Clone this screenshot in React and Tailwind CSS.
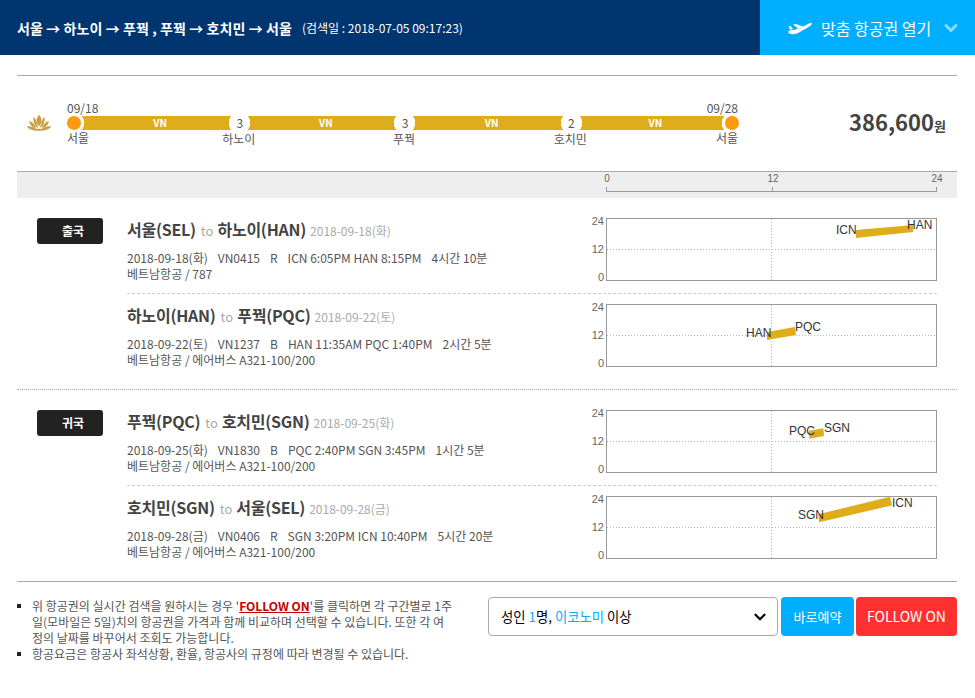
import { ChevronDown } from "lucide-react"

const FONT = "font-['Noto_Sans_CJK_KR','Noto_Sans',sans-serif]"

const TRIPS = [
  {
    label: "출국",
    legs: [
      {
        from: "서울(SEL)",
        to: "하노이(HAN)",
        date: "2018-09-18(화)",
        detail: ["2018-09-18(화)", "VN0415", "R", "ICN 6:05PM HAN 8:15PM", "4시간 10분"],
        carrier: "베트남항공 / 787",
        bar: "276,12 333,7 333,14 276,20",
        labels: [
          { text: "ICN", x: 256, y: 16 },
          { text: "HAN", x: 327, y: 11 },
        ],
      },
      {
        from: "하노이(HAN)",
        to: "푸꿕(PQC)",
        date: "2018-09-22(토)",
        detail: ["2018-09-22(토)", "VN1237", "B", "HAN 11:35AM PQC 1:40PM", "2시간 5분"],
        carrier: "베트남항공 / 에어버스 A321-100/200",
        bar: "187,28 215,23 216,31 187,36",
        labels: [
          { text: "HAN", x: 166, y: 33 },
          { text: "PQC", x: 215, y: 27 },
        ],
      },
    ],
  },
  {
    label: "귀국",
    legs: [
      {
        from: "푸꿕(PQC)",
        to: "호치민(SGN)",
        date: "2018-09-25(화)",
        detail: ["2018-09-25(화)", "VN1830", "B", "PQC 2:40PM SGN 3:45PM", "1시간 5분"],
        carrier: "베트남항공 / 에어버스 A321-100/200",
        bar: "229,20.7 243.3,18.3 244,26 229.3,28.7",
        labels: [
          { text: "PQC", x: 209, y: 25 },
          { text: "SGN", x: 244, y: 22 },
        ],
      },
      {
        from: "호치민(SGN)",
        to: "서울(SEL)",
        date: "2018-09-28(금)",
        detail: ["2018-09-28(금)", "VN0406", "R", "SGN 3:20PM ICN 10:40PM", "5시간 20분"],
        carrier: "베트남항공 / 에어버스 A321-100/200",
        bar: "238.3,18.3 310,0.7 312.3,9.3 239,26.3",
        labels: [
          { text: "SGN", x: 218, y: 23 },
          { text: "ICN", x: 312, y: 11 },
        ],
      },
    ],
  },
]

function TimeChart({ bar, labels }) {
  return (
    <svg width="357" height="63" viewBox="0 0 357 63" className="shrink-0 overflow-visible">
      <rect x="26.5" y="0.5" width="330" height="62" fill="#fff" stroke="#999" />
      <path d="M191.5 1V62M27 31.5H356" stroke="#bbb" strokeDasharray="1 2" fill="none" />
      <g fontFamily="'Liberation Sans',sans-serif" fontSize="11" fill="#666" textAnchor="end">
        <text x="24" y="7">24</text>
        <text x="24" y="35">12</text>
        <text x="24" y="63">0</text>
      </g>
      <polygon points={bar} fill="#dfad1c" />
      <g fontFamily="'Liberation Sans',sans-serif" fontSize="12" fill="#333">
        {labels.map((l) => (
          <text key={l.text} x={l.x} y={l.y}>
            {l.text}
          </text>
        ))}
      </g>
    </svg>
  )
}

function Leg({ leg, first }) {
  return (
    <div
      className={`flex justify-between pt-[10px] ${
        first ? "h-[86px] border-b border-dashed border-[#ccc]" : ""
      }`}
    >
      <div>
        <p className="-mt-px flex h-[24px] items-baseline text-[16px] leading-[24px] font-bold tracking-[-0.25px] text-[#444]">
          {leg.from}
          <span className="mr-[4px] ml-[5px] text-[13px] font-normal tracking-normal text-[#aaa]">to</span>
          {leg.to}
          <span className="ml-[4px] text-[12px] font-normal tracking-normal text-[#aaa]">{leg.date}</span>
        </p>
        <p className="mt-[9px] flex text-[12px] leading-[16px] text-[#555]">
          {leg.detail.map((d) => (
            <span key={d} className="mr-[10px]">
              {d}
            </span>
          ))}
        </p>
        <p className="text-[12px] leading-[16px] text-[#555]">{leg.carrier}</p>
      </div>
      <TimeChart bar={leg.bar} labels={leg.labels} />
    </div>
  )
}

function Stop({ count, name }) {
  return (
    <div className="relative flex h-[14px] w-[21px] shrink-0 items-center justify-center bg-[radial-gradient(circle,#fff_10.5px,#dfad1c_11px)] text-[12px] leading-none text-[#555]">
      {count}
      <span className="absolute top-[15px] left-[calc(50%-1px)] -translate-x-1/2 leading-[16px] whitespace-nowrap">
        {name}
      </span>
    </div>
  )
}

function Segment({ width }) {
  return (
    <div
      className={`flex h-[14px] items-center justify-center bg-[#dfad1c] pl-[7px] text-[10px] leading-none font-bold text-white ${width}`}
    >
      VN
    </div>
  )
}

export default function App() {
  return (
    <div className={`${FONT} h-[698px] w-[975px] bg-white`}>
      <header className="flex h-[55px] items-center justify-between bg-[#00356f] pl-[17px]">
        <div className="flex items-center text-white">
          <h1 className="text-[14px] leading-[20px] font-bold tracking-[0.08px]">
            서울 → 하노이 → 푸꿕 , 푸꿕 → 호치민 → 서울
          </h1>
          <span className="ml-[10px] text-[12px] leading-[20px]">(검색일 : 2018-07-05 09:17:23)</span>
        </div>
        <button
          type="button"
          className="flex h-[55px] w-[215px] items-center bg-[#00aeff] pl-[28px] text-[16px] text-white"
        >
          <svg width="24" height="14" viewBox="0 0 24 14" fill="#fff" className="mr-[9px]">
            <path d="M0 11C1 9 3 9 6 9L10 7.5 5 3.5 8 3 15 5.5 20 3C22 2 24 1.5 24 2.5 24 4 20 6.5 17 8L11 11.5C7 13.5 2 14 0 11Z" />
            <path d="M0.5 5.5 2.5 5 5 8 2 8.8Z" />
          </svg>
          맞춤 항공권 열기
          <ChevronDown size={20} strokeWidth={3.5} className="ml-[10px] text-[#8edcff]" />
        </button>
      </header>

      <main className="pt-[20px] pr-[18px] pl-[17px]">
        <section className="flex h-[97px] items-center border-t border-b border-[#aaa] pb-[2px]">
          <svg
            width="24"
            height="16"
            viewBox="0 0 24 16"
            fill="#c99c3f"
            stroke="#c99c3f"
            strokeWidth="0.5"
            className="mt-[1px] ml-[10px] shrink-0"
          >
            <path d="M12 0C14 2.5 14.6 5 14 8L12 11 10 8C9.4 5 10 2.5 12 0Z" />
            <path d="M6.6 2.4C8.4 3.6 9.2 6 9.6 9L11 12.4C8.4 11.4 6.6 8.6 6.6 2.4Z" />
            <path d="M17.4 2.4C15.6 3.6 14.8 6 14.4 9L13 12.4C15.6 11.4 17.4 8.6 17.4 2.4Z" />
            <path d="M2.4 6.6C5 7 7 9 9 13 5.6 12.8 3.4 10.4 2.4 6.6Z" />
            <path d="M21.6 6.6C19 7 17 9 15 13 18.4 12.8 20.6 10.4 21.6 6.6Z" />
            <path d="M0 11.6C3 11.2 7 12.6 9 14H15C17 12.6 21 11.2 24 11.6 22 14.4 18 15.6 12 15.6S2 14.4 0 11.6Z" />
          </svg>

          <div className="ml-[16px] flex w-[672px] items-center text-[12px] text-[#555]">
            <div className="relative flex h-[14px] w-[17px] shrink-0 items-center bg-[radial-gradient(circle_at_7px_7px,#fff_10px,#dfad1c_10.5px)]">
              <span className="h-[14px] w-[14px] rounded-full bg-[#ff9a0d]" />
              <span className="absolute top-[-16px] left-0 leading-[16px]">09/18</span>
              <span className="absolute top-[14px] left-0 leading-[16px] whitespace-nowrap">서울</span>
            </div>
            <Segment width="w-[146px]" />
            <Stop count="3" name="하노이" />
            <Segment width="w-[145px]" />
            <Stop count="3" name="푸꿕" />
            <Segment width="w-[146px]" />
            <Stop count="2" name="호치민" />
            <Segment width="w-[141px]" />
            <div className="relative flex h-[14px] w-[17px] shrink-0 items-center justify-end bg-[radial-gradient(circle_at_10px_7px,#fff_10px,#dfad1c_10.5px)]">
              <span className="h-[14px] w-[14px] rounded-full bg-[#ff9a0d]" />
              <span className="absolute top-[-16px] right-[1px] leading-[16px]">09/28</span>
              <span className="absolute top-[14px] right-[1px] leading-[16px] whitespace-nowrap">서울</span>
            </div>
          </div>

          <p className="ml-auto pr-[11px] font-bold text-[#444]">
            <span className="text-[22px] leading-none">386,600</span>
            <span className="text-[13px]">원</span>
          </p>
        </section>

        <div className="flex h-[26px] justify-end bg-[#eee] pr-[20px]">
          <div className="relative mt-[15px] h-[5px] w-[331px] border-x border-b border-[#999]">
            <span className="absolute top-0 left-1/2 h-[4px] w-px bg-[#999]" />
            <div className="absolute top-[-14px] left-[-6px] flex w-[342px] justify-between font-['Liberation_Sans',sans-serif] text-[10px] leading-[12px] text-[#666]">
              <span className="w-[12px] text-center">0</span>
              <span className="w-[12px] translate-x-px text-center">12</span>
              <span className="w-[12px] text-center">24</span>
            </div>
          </div>
        </div>

        {TRIPS.map((trip, i) => (
          <section
            key={trip.label}
            className={`flex h-[192px] pt-[10px] pr-[20px] pl-[20px] ${
              i === 0 ? "border-b border-dotted border-[#aaa]" : "border-b border-[#aaa]"
            }`}
          >
            <div className="mt-[10px] flex h-[26px] w-[66px] shrink-0 items-center justify-center rounded-[3px] bg-[#222] pl-[6px] text-[12px] font-bold text-white">
              {trip.label}
            </div>
            <div className="ml-[24px] min-w-0 flex-1">
              {trip.legs.map((leg, n) => (
                <Leg key={leg.from} leg={leg} first={n === 0} />
              ))}
            </div>
          </section>
        ))}

        <footer className="flex items-start justify-between pt-[15px]">
          <ul className="mt-[1px] w-[437px] text-[12px] leading-[16px] text-[#555]">
            <li className="relative pl-[15px]">
              <span className="absolute top-[6px] left-0 h-[4px] w-[4px] bg-[#222]" />위 항공권의 실시간 검색을 원하시는 경우 '
              <a className="font-bold text-[#c40000] underline">FOLLOW ON</a>'를 클릭하면 각 구간별로 1주일(모바일은 5일)치의 항공권을 가격과 함께 비교하며 선택할 수 있습니다. 또한 각 여정의 날짜를 바꾸어서 조회도 가능합니다.
            </li>
            <li className="relative pl-[15px]">
              <span className="absolute top-[6px] left-0 h-[4px] w-[4px] bg-[#222]" />항공요금은 항공사 좌석상황, 환율, 항공사의 규정에 따라 변경될 수 있습니다.
            </li>
          </ul>
          <div className="flex h-[39px] text-[13px]">
            <div className="flex w-[290px] items-center justify-between rounded-[4px] border border-[#aaa] pr-[8px] pl-[12px] text-[13.33px] text-[#000]">
              <span>
                성인 <span className="text-[#00aeff]">1</span>명, <span className="text-[#00aeff]">이코노미</span> 이상
              </span>
              <ChevronDown size={18} strokeWidth={3} />
            </div>
            <button type="button" className="ml-[3px] w-[73px] rounded-[4px] bg-[#00aeff] text-white">
              바로예약
            </button>
            <button type="button" className="ml-[2px] w-[101px] rounded-[4px] bg-[#ff3030] text-[14px] text-white">
              FOLLOW ON
            </button>
          </div>
        </footer>
      </main>
    </div>
  )
}
